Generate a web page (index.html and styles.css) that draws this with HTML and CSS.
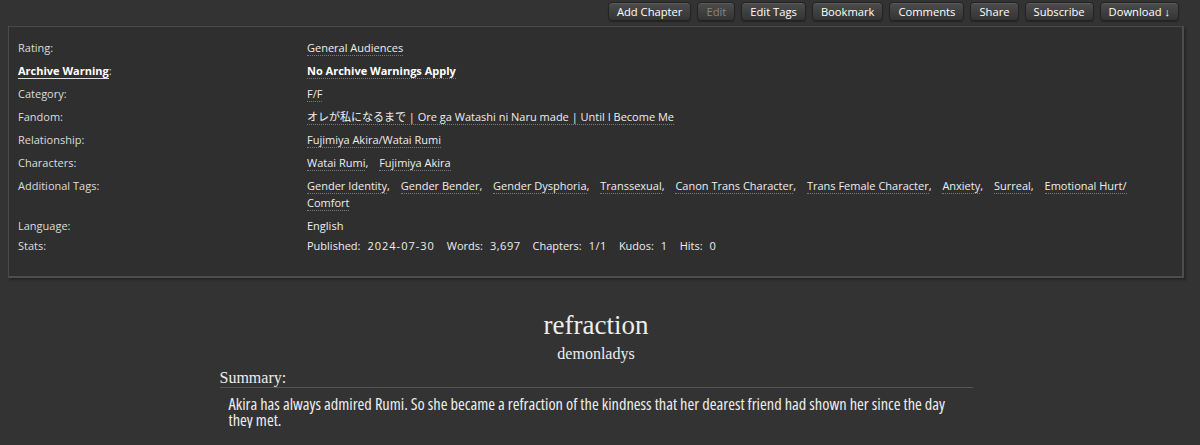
FILE: index.html
```html
<!DOCTYPE html>
<html lang="en">
<head>
<meta charset="utf-8">
<title>refraction</title>
<link rel="stylesheet" href="styles.css">
</head>
<body>
<div class="page">
  <ul class="actions">
    <li><a class="btn">Add Chapter</a></li>
    <li><a class="btn disabled">Edit</a></li>
    <li><a class="btn">Edit Tags</a></li>
    <li><a class="btn">Bookmark</a></li>
    <li><a class="btn">Comments</a></li>
    <li><a class="btn">Share</a></li>
    <li><a class="btn">Subscribe</a></li>
    <li><a class="btn">Download <span class="arrow">↓</span></a></li>
  </ul>

  <div class="meta">
    <dl class="tags">
      <dt>Rating:</dt>
      <dd><a class="tag">General Audiences</a></dd>
      <dt><span class="warn-label">Archive Warning</span>:</dt>
      <dd><a class="tag strong">No Archive Warnings Apply</a></dd>
      <dt>Category:</dt>
      <dd><a class="tag">F/F</a></dd>
      <dt>Fandom:</dt>
      <dd><a class="tag">オレが私になるまで | Ore ga Watashi ni Naru made | Until I Become Me</a></dd>
      <dt>Relationship:</dt>
      <dd><a class="tag">Fujimiya Akira/Watai Rumi</a></dd>
      <dt>Characters:</dt>
      <dd><a class="tag">Watai Rumi</a><span class="sep">,</span> <a class="tag">Fujimiya Akira</a></dd>
      <dt>Additional Tags:</dt>
      <dd class="wrap"><a class="tag">Gender Identity</a><span class="sep">,</span> <a class="tag">Gender Bender</a><span class="sep">,</span> <a class="tag">Gender Dysphoria</a><span class="sep">,</span> <a class="tag">Transsexual</a><span class="sep">,</span> <a class="tag">Canon Trans Character</a><span class="sep">,</span> <a class="tag">Trans Female Character</a><span class="sep">,</span> <a class="tag">Anxiety</a><span class="sep">,</span> <a class="tag">Surreal</a><span class="sep">,</span> <a class="tag">Emotional Hurt/<wbr>Comfort</a></dd>
      <dt class="short">Language:</dt>
      <dd class="short">English</dd>
      <dt>Stats:</dt>
      <dd class="stats"><span class="sk">Published:</span><span class="sv date">2024-07-30</span><span class="sk">Words:</span><span class="sv">3,697</span><span class="sk">Chapters:</span><span class="sv">1/1</span><span class="sk">Kudos:</span><span class="sv">1</span><span class="sk">Hits:</span><span class="sv">0</span></dd>
    </dl>
  </div>

  <div class="preface">
    <h2 class="title">refraction</h2>
    <h3 class="byline">demonladys</h3>
    <div class="summary">
      <h3 class="heading">Summary:</h3>
      <blockquote class="userstuff">Akira has always admired Rumi. So she became a refraction of the kindness that her dearest friend had shown her since the day they met.</blockquote>
    </div>
  </div>
</div>
</body>
</html>
```

FILE: styles.css
```css
html, body {
  margin: 0;
  padding: 0;
  background: #333333;
  color: #dddddd;
  font-family: "Open Sans", "Noto Sans CJK JP", sans-serif;
  font-size: 11px;
}

.page {
  width: 1176px;
  padding-left: 8px;
}

.actions {
  list-style: none;
  margin: 0;
  padding: 2px 5px 0 0;
  height: 24px;
  display: flex;
  justify-content: flex-end;
  gap: 6px;
}

.btn {
  display: block;
  height: 19px;
  line-height: 17px;
  box-sizing: border-box;
  padding: 0 8px;
  border-radius: 4px;
  color: #ffffff;
  font-size: 11.2px;
  background: linear-gradient(#4c4c4c, #343434);
  border: 1px solid #232323;
  box-shadow: inset 0 1px 0 #5c5c5c, 0 1px 1px #242424;
  white-space: nowrap;
}

.btn.disabled {
  color: #858585;
}

.arrow {
  font-family: "Liberation Sans", sans-serif;
  font-size: 11px;
}

.meta {
  background: #2f2f2f;
  border-top: 1px solid #4a4a4a;
  border-left: 1px solid #4a4a4a;
  border-right: 2px solid #4d4d4d;
  border-bottom: 2px solid #4d4d4d;
  box-shadow: 2px 2px 2px #262626;
  padding: 12px 10px 16px 9px;
}

.tags {
  margin: 0;
  display: grid;
  grid-template-columns: 289px 1fr;
  line-height: 17px;
}

.tags dt {
  margin: 0;
  padding-bottom: 6px;
  color: #dddddd;
}

.tags dd {
  margin: 0;
  padding-bottom: 6px;
  color: #eeeeee;
}

.tags dd.wrap {
  max-width: 835px;
}

.tags .short {
  padding-bottom: 3px;
}

.warn-label {
  font-weight: bold;
  color: #ffffff;
  border-bottom: 1px solid #dddddd;
}

.tag {
  color: #eeeeee;
  border-bottom: 1px dotted #7a7a7a;
}

.tag.strong {
  font-weight: bold;
  color: #ffffff;
}

.sep {
  margin-right: 8px;
}

.stats {
  white-space: nowrap;
}

.stats .sk {
  margin-right: 7px;
}

.stats .sv {
  margin-right: 12px;
  letter-spacing: 0.5px;
}

.stats .sv.date {
  letter-spacing: 1px;
}

.preface {
  width: 753px;
  margin: 0 auto;
  padding-top: 32px;
  color: #eeeeee;
}

.title {
  margin: 0;
  text-align: center;
  font-family: "Liberation Serif", serif;
  font-weight: normal;
  font-size: 27px;
  line-height: 30px;
}

.byline {
  margin: 0;
  padding-top: 4px;
  text-align: center;
  font-family: "Liberation Serif", serif;
  font-weight: normal;
  font-size: 16px;
  line-height: 20px;
}

.summary {
  margin-top: 5px;
}

.summary .heading {
  margin: 0;
  font-family: "Liberation Serif", serif;
  font-weight: normal;
  font-size: 16px;
  line-height: 18px;
  border-bottom: 1px solid #555555;
}

.userstuff {
  margin: 0;
  padding: 8px 9px 0 9px;
  font-family: "Liberation Sans Narrow", "Open Sans", sans-serif;
  font-stretch: condensed;
  font-size: 16.4px;
  line-height: 16px;
  color: #eeeeee;
}
```
